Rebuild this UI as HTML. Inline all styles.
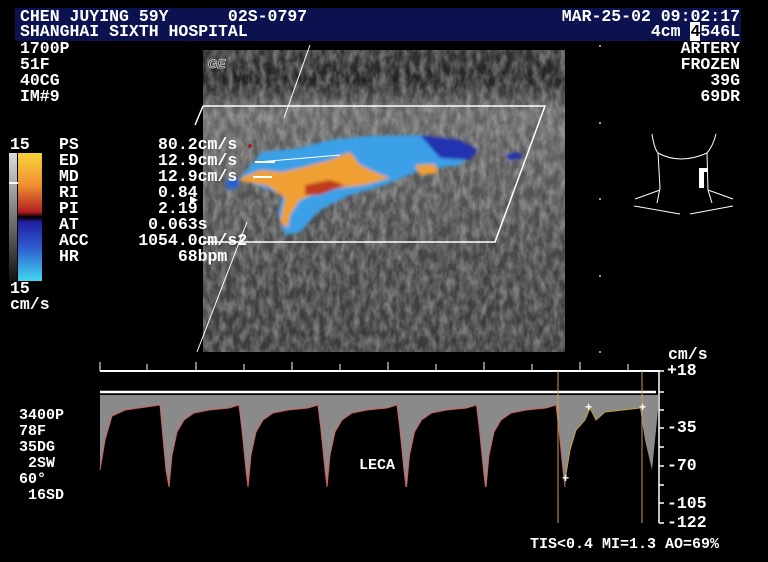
<!DOCTYPE html>
<html><head><meta charset="utf-8"><style>
html,body{margin:0;padding:0;background:#000;}
#r{position:relative;width:768px;height:562px;overflow:hidden;background:#000;font-family:"Liberation Mono","DejaVu Sans Mono",monospace;font-weight:bold;color:#fff;font-size:16.5px;line-height:16px;}
.t{position:absolute;white-space:pre;}
.rt{position:absolute;white-space:pre;right:28px;text-align:right;}
.bar{position:absolute;left:15px;top:8px;width:726px;height:33px;background:#0c1250;}
</style></head><body><div id="r">
<div class="bar"></div>
<svg style="position:absolute;left:0;top:0" width="768" height="562">
<defs>
<filter id="n" x="0" y="0" width="100%" height="100%">
<feTurbulence type="fractalNoise" baseFrequency="0.15 0.08" numOctaves="3" seed="4"/>
<feColorMatrix values="0 0 0 0 0.7  0 0 0 0 0.7  0 0 0 0 0.7  0 0 0 2 -0.6"/>
</filter>
<linearGradient id="g" x1="0" y1="0" x2="0" y2="1">
<stop offset="0" stop-color="#333"/><stop offset="0.1" stop-color="#222"/><stop offset="0.2" stop-color="#666"/><stop offset="0.4" stop-color="#5a5a5a"/><stop offset="0.7" stop-color="#444"/><stop offset="1" stop-color="#3a3a3a"/>
</linearGradient>
<filter id="b2"><feGaussianBlur stdDeviation="1.5"/></filter>
<linearGradient id="cb" x1="0" y1="0" x2="0" y2="1">
<stop offset="0" stop-color="#f7d33a"/><stop offset="0.25" stop-color="#f09030"/><stop offset="0.46" stop-color="#b02020"/><stop offset="0.5" stop-color="#000"/><stop offset="0.54" stop-color="#2020a0"/><stop offset="0.75" stop-color="#3060d0"/><stop offset="1" stop-color="#40d8f0"/>
</linearGradient>
<linearGradient id="gb" x1="0" y1="0" x2="0" y2="1"><stop offset="0" stop-color="#ddd"/><stop offset="1" stop-color="#111"/></linearGradient>
</defs>
<rect x="203" y="50" width="362" height="302" fill="url(#g)"/>
<rect x="203" y="50" width="362" height="302" filter="url(#n)" opacity="0.4"/>
<text x="208" y="68" font-family="Liberation Sans" font-style="italic" font-weight="bold" font-size="12" fill="#222" stroke="#ccc" stroke-width="0.8">GE</text>
<g filter="url(#b2)">
<path d="M240 178 L262 152 L300 148 L330 140 L370 136 L420 135 L460 140 L475 150 L460 165 L420 170 L385 185 L350 195 L320 210 L300 232 L285 235 L278 215 L282 195 L255 185 Z" fill="#3aa0e8"/>
<path d="M420 135 L460 140 L478 150 L470 160 L440 158 Z" fill="#2030b0"/>
<path d="M236 180 L260 170 L282 172 L300 168 L330 160 L350 152 L360 165 L375 172 L390 178 L365 185 L340 188 L320 192 L300 200 L290 215 L288 228 L280 222 L285 198 L268 186 Z" fill="#f0a030"/>
<path d="M305 185 L330 180 L345 185 L320 195 L305 195 Z" fill="#c03a1a"/>
<path d="M415 165 L435 164 L438 173 L420 175 Z" fill="#f0a030"/>
<path d="M505 155 L520 152 L523 158 L510 160 Z" fill="#2030b0"/>
<path d="M225 180 L240 178 L238 188 L228 190 Z" fill="#2a60d0"/>
</g>
<circle cx="250" cy="146" r="2" fill="#a02020"/>
<g stroke="#fff" stroke-width="1.5" fill="none">
<polyline points="203,106 545,106 495,242 203,242"/>
<line x1="203" y1="106" x2="195" y2="125"/>
</g>
<g stroke="#fff" stroke-width="1" fill="none">
<line x1="310" y1="45" x2="284" y2="118"/>
<line x1="247" y1="222" x2="197" y2="352"/>
<line x1="258" y1="162" x2="340" y2="155"/>
</g>
<line x1="255" y1="162" x2="275" y2="162" stroke="#fff" stroke-width="2"/>
<line x1="253" y1="177" x2="272" y2="177" stroke="#fff" stroke-width="2"/>
<polygon points="190,196 198,200 190,204" fill="#fff"/>
<g fill="#ccc"><circle cx="600" cy="46" r="1"/><circle cx="600" cy="123" r="1"/><circle cx="600" cy="199" r="1"/><circle cx="600" cy="276" r="1"/><circle cx="600" cy="352" r="1"/></g>
<g stroke="#fff" stroke-width="1" fill="none">
<path d="M652 134 Q654 148 658 153 Q680 165 707 153 Q713 146 716 134"/>
<path d="M658 153 L660 188 L657 203"/>
<path d="M707 153 L708 190 L712 203"/>
<path d="M660 190 L635 199 M634 206 L680 214"/>
<path d="M708 190 L733 199 M733 206 L690 214"/>
</g>
<rect x="699" y="168" width="5" height="20" fill="#fff"/><rect x="699" y="168" width="9" height="4" fill="#fff"/>
<rect x="9" y="153" width="8" height="128" fill="url(#gb)"/>
<rect x="9" y="182" width="9" height="2" fill="#fff"/>
<rect x="18" y="153" width="24" height="128" fill="url(#cb)"/>
<line x1="100" y1="371" x2="660" y2="371" stroke="#fff" stroke-width="2"/>
<g stroke="#fff" stroke-width="1">
<line x1="100" y1="362" x2="100" y2="371"/><line x1="147" y1="364" x2="147" y2="371"/><line x1="196" y1="362" x2="196" y2="371"/><line x1="244" y1="364" x2="244" y2="371"/><line x1="292" y1="362" x2="292" y2="371"/><line x1="340" y1="364" x2="340" y2="371"/><line x1="388" y1="362" x2="388" y2="371"/><line x1="436" y1="364" x2="436" y2="371"/><line x1="484" y1="362" x2="484" y2="371"/><line x1="532" y1="364" x2="532" y2="371"/><line x1="580" y1="362" x2="580" y2="371"/><line x1="628" y1="364" x2="628" y2="371"/>
</g>
<line x1="100" y1="392" x2="656" y2="392" stroke="#fff" stroke-width="2.5"/>
<defs>
<g id="cy">
<path d="M0 395 L0 487 L3 455 L8 432 L15 420 L25 413 L40 410 L60 408 L70 405 L73 430 L77 470 L79.5 487 L79.5 395 Z" fill="#8a8a8a"/>
<path d="M0 487 L3 455 L8 432 L15 420 L25 413 L40 410 L60 408 L70 405 L73 430 L77 470 L79 487" fill="none" stroke="#d06060" stroke-width="1"/>
</g>
</defs>
<path d="M100 395 L100 470 L105 440 L112 416 L125 410 L160 405 L166 470 L169 487 L169.5 395 Z" fill="#8a8a8a"/>
<path d="M100 470 L105 440 L112 416 L125 410 L160 405 L166 470 L169 487" fill="none" stroke="#d06060"/>
<use href="#cy" x="169"/><use href="#cy" x="248"/><use href="#cy" x="327"/><use href="#cy" x="406.5"/><use href="#cy" x="486"/>
<path d="M565 395 L565 480 L570 450 L576 430 L585 420 L590 408 L596 420 L605 412 L640 408 L645 440 L652 470 L655 440 L658 410 L658 395 Z" fill="#8a8a8a"/>
<path d="M565 480 L570 450 L576 430 L585 420 L590 408 L596 420 L605 412 L640 408" fill="none" stroke="#c0a040"/>
<line x1="558" y1="371" x2="558" y2="523" stroke="#d09a50"/>
<line x1="642" y1="371" x2="642" y2="523" stroke="#d09a50"/>
<text x="562" y="482" fill="#fff" font-size="12">+</text><text x="585" y="411" fill="#fff" font-size="12">+</text><text x="639" y="411" fill="#fff" font-size="12">+</text>
<g stroke="#fff" stroke-width="1.5">
<line x1="659" y1="371" x2="659" y2="523"/>
<line x1="659" y1="371" x2="664" y2="371"/><line x1="659" y1="392" x2="664" y2="392"/><line x1="659" y1="410" x2="664" y2="410"/><line x1="659" y1="428" x2="664" y2="428"/><line x1="659" y1="447" x2="664" y2="447"/><line x1="659" y1="466" x2="664" y2="466"/><line x1="659" y1="485" x2="664" y2="485"/><line x1="659" y1="503" x2="664" y2="503"/><line x1="659" y1="523" x2="664" y2="523"/>
</g>
</svg>
<div class="t" style="left:20px;top:9px">CHEN JUYING 59Y      02S-0797</div>
<div class="t" style="left:20px;top:24px">SHANGHAI SIXTH HOSPITAL</div>
<div class="rt" style="top:9px">MAR-25-02 09:02:17</div>
<div class="rt" style="top:24px">4cm <span style="background:#fff;color:#000">4</span>546L</div>
<div class="t" style="left:20px;top:41px">1700P
51F
40CG
IM#9</div>
<div class="rt" style="top:41px">ARTERY
FROZEN
39G
69DR</div>
<div class="t" style="left:10px;top:137px">15</div>
<div class="t" style="left:10px;top:281px">15
cm/s</div>
<div class="t" style="left:59px;top:137px">PS        80.2cm/s
ED        12.9cm/s
MD        12.9cm/s
RI        0.84
PI        2.19
AT       0.063s
ACC     1054.0cm/s2
HR          68bpm</div>
<div class="t" style="left:19px;top:408px;font-size:15px">3400P
78F
35DG
 2SW
60°
 16SD</div>
<div class="t" style="left:359px;top:458px;font-size:15px">LECA</div>
<div class="t" style="left:668px;top:347px">cm/s</div>
<div class="t" style="left:667px;top:363px">+18</div>
<div class="t" style="left:667px;top:420px">-35</div>
<div class="t" style="left:667px;top:458px">-70</div>
<div class="t" style="left:667px;top:496px">-105</div>
<div class="t" style="left:667px;top:515px">-122</div>
<div class="t" style="left:530px;top:537px;font-size:15px">TIS&lt;0.4 MI=1.3 AO=69%</div>
</div></body></html>
